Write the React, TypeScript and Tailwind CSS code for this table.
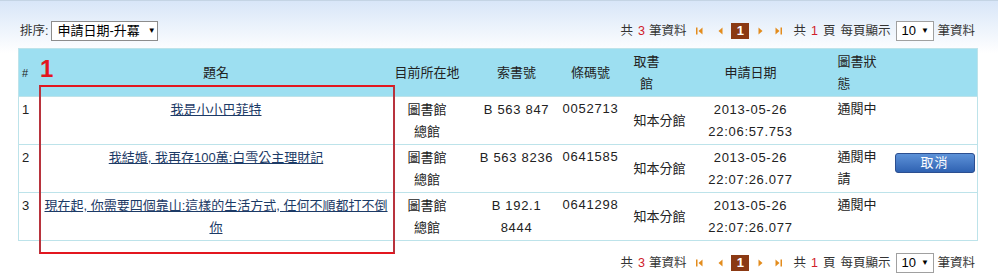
import React from "react";

const FONT = { fontFamily: '"Liberation Sans", "Noto Sans CJK TC", sans-serif' };

type Row = {
  n: number;
  title: string[];
  call: string[];
  barcode: string;
  date: string;
  time: string;
  status: string[];
  cancel: boolean;
};

const rows: Row[] = [
  {
    n: 1,
    title: ["我是小小巴菲特"],
    call: ["B 563 847"],
    barcode: "0052713",
    date: "2013-05-26",
    time: "22:06:57.753",
    status: ["通閱中"],
    cancel: false,
  },
  {
    n: 2,
    title: ["我結婚, 我再存100萬:白雪公主理財記"],
    call: ["B 563 8236"],
    barcode: "0641585",
    date: "2013-05-26",
    time: "22:07:26.077",
    status: ["通閱申", "請"],
    cancel: true,
  },
  {
    n: 3,
    title: ["現在起, 你需要四個靠山:這樣的生活方式, 任何不順都打不倒", "你"],
    call: ["B 192.1", "8444"],
    barcode: "0641298",
    date: "2013-05-26",
    time: "22:07:26.077",
    status: ["通閱中"],
    cancel: false,
  },
];

function Arrow({ dir, bar }: { dir: "l" | "r"; bar?: boolean }) {
  return (
    <svg width={bar ? 7 : 5} height="8" viewBox={bar ? "0 0 7 8" : "0 0 5 8"} className="block">
      {dir === "l" ? (
        bar ? (
          <>
            <rect x="0" y="0.5" width="1.5" height="7" fill="#e38c1d" />
            <polygon points="6.5,0.5 2.5,4 6.5,7.5" fill="#e38c1d" />
          </>
        ) : (
          <polygon points="4.5,0.5 0.5,4 4.5,7.5" fill="#e38c1d" />
        )
      ) : bar ? (
        <>
          <polygon points="0.5,0.5 4.5,4 0.5,7.5" fill="#e38c1d" />
          <rect x="5.5" y="0.5" width="1.5" height="7" fill="#e38c1d" />
        </>
      ) : (
        <polygon points="0.5,0.5 4.5,4 0.5,7.5" fill="#e38c1d" />
      )}
    </svg>
  );
}

function Pager() {
  return (
    <div className="flex items-center text-[12.5px] text-[#333] h-[20px]">
      <span>共</span>
      <span className="ml-[5px] text-[#d0202a]">3</span>
      <span className="ml-[4px]">筆資料</span>
      <span className="ml-[10px]">
        <Arrow dir="l" bar />
      </span>
      <span className="ml-[15px]">
        <Arrow dir="l" />
      </span>
      <span className="ml-[8px] w-[18px] h-[16px] bg-[#8b3913] text-white font-bold text-[13px] leading-[16px] text-center">
        1
      </span>
      <span className="ml-[9px]">
        <Arrow dir="r" />
      </span>
      <span className="ml-[12px]">
        <Arrow dir="r" bar />
      </span>
      <span className="ml-[11px]">共</span>
      <span className="ml-[5px] text-[#d0202a]">1</span>
      <span className="ml-[5px]">頁</span>
      <span className="ml-[5px]">每頁顯示</span>
      <span className="ml-[6px] w-[38px] h-[20px] border border-[#a0a0a0] bg-white flex items-center pl-[4px] text-black text-[13px]">
        10
        <span className="ml-[5px] text-[8px]">▼</span>
      </span>
      <span className="ml-[3px]">筆資料</span>
    </div>
  );
}

export default function App() {
  return (
    <div
      className="relative w-[998px] h-[279px] overflow-hidden border-t border-[#c4d4e4] bg-[linear-gradient(to_bottom,#d8e6f8_0px,#ffffff_52px)] text-[#222]"
      style={FONT}
    >
      {/* top bar */}
      <div className="flex items-end justify-between h-[47px] pb-[7px] pl-[20px] pr-[23px]">
        <div className="flex items-center text-[12.5px] text-[#333]">
          <span>排序:</span>
          <span className="ml-[3px] w-[107px] h-[20px] border border-[#8c8c8c] bg-white flex items-center pl-[5px] text-black text-[13px]">
            申請日期-升冪
            <span className="ml-[8px] text-[8px]">▼</span>
          </span>
        </div>
        <Pager />
      </div>

      {/* table */}
      <table className="ml-[18px] w-[959px] table-fixed border-collapse border border-[#bde3ea] text-[13px]">
        <colgroup>
          <col className="w-[20px]" />
          <col className="w-[355px]" />
          <col className="w-[67px]" />
          <col className="w-[100px]" />
          <col className="w-[60px]" />
          <col className="w-[70px]" />
          <col className="w-[120px]" />
          <col className="w-[80px]" />
          <col className="w-[87px]" />
        </colgroup>
        <thead>
          <tr className="bg-[#9ddff1] h-[48px] leading-[22px]">
            <th className="font-normal text-left pl-[3px] text-[11px]">#</th>
            <th className="font-normal text-center">題名</th>
            <th className="font-normal text-center whitespace-nowrap">目前所在地</th>
            <th className="font-normal text-center pl-[12px]">索書號</th>
            <th className="font-normal text-center">條碼號</th>
            <th className="font-normal text-left pl-[13px]">
              <span className="inline-block w-[26px] text-center">
                取書
                <br />
                館
              </span>
            </th>
            <th className="font-normal text-center">申請日期</th>
            <th className="font-normal text-left pl-[27px]">
              圖書狀
              <br />
              態
            </th>
            <th className="font-normal"></th>
          </tr>
        </thead>
        <tbody>
          {rows.map((r) => (
            <tr key={r.n} className="border-t border-[#bde3ea] leading-[22px] h-[48px]">
              <td className="align-top pt-[2px] pl-[3px]">{r.n}</td>
              <td className="align-top pt-[2px] text-center">
                {r.title.map((t, i) => (
                  <div key={i} className="whitespace-nowrap">
                    <a className="underline text-[#1c3a66] cursor-pointer">{t}</a>
                  </div>
                ))}
              </td>
              <td className="align-top pt-[2px] text-center">
                圖書館
                <br />
                總館
              </td>
              <td className="align-top pt-[2px] text-center pl-[12px] tracking-[0.7px] whitespace-nowrap">
                {r.call.map((c, i) => (
                  <div key={i}>{c}</div>
                ))}
              </td>
              <td className="align-top pt-[1px] text-center tracking-[0.8px]">{r.barcode}</td>
              <td className="align-middle text-left pl-[13px] whitespace-nowrap">知本分館</td>
              <td className="align-top pt-[2px] text-center tracking-[0.7px] whitespace-nowrap">
                {r.date}
                <br />
                {r.time}
              </td>
              <td className="align-top pt-[1px] text-left pl-[27px] whitespace-nowrap">
                {r.status.map((s, i) => (
                  <div key={i}>{s}</div>
                ))}
              </td>
              <td className="align-top pt-[7px] pl-[4px]">
                {r.cancel && (
                  <button className="w-[80px] h-[20px] rounded-[3px] border border-[#2c4f90] bg-[linear-gradient(to_bottom,#5d92d8,#2f62b2)] text-white text-[13px] leading-[18px] tracking-[1px]">
                    取消
                  </button>
                )}
              </td>
            </tr>
          ))}
        </tbody>
      </table>

      {/* bottom pager */}
      <div className="flex justify-end pr-[23px] mt-[12px]">
        <Pager />
      </div>

      {/* annotation overlay */}
      <div className="absolute left-[39px] top-[84px] w-[356px] h-[169px] border-y-2 border-y-[#e3161f] border-x-2 border-x-[#b8333d] pointer-events-none" />
      <div
        className="absolute left-[40px] top-[56px] text-[24px] font-bold text-[#e3161f] leading-none"
        style={{ fontFamily: '"Liberation Sans", sans-serif' }}
      >
        1
      </div>
    </div>
  );
}
